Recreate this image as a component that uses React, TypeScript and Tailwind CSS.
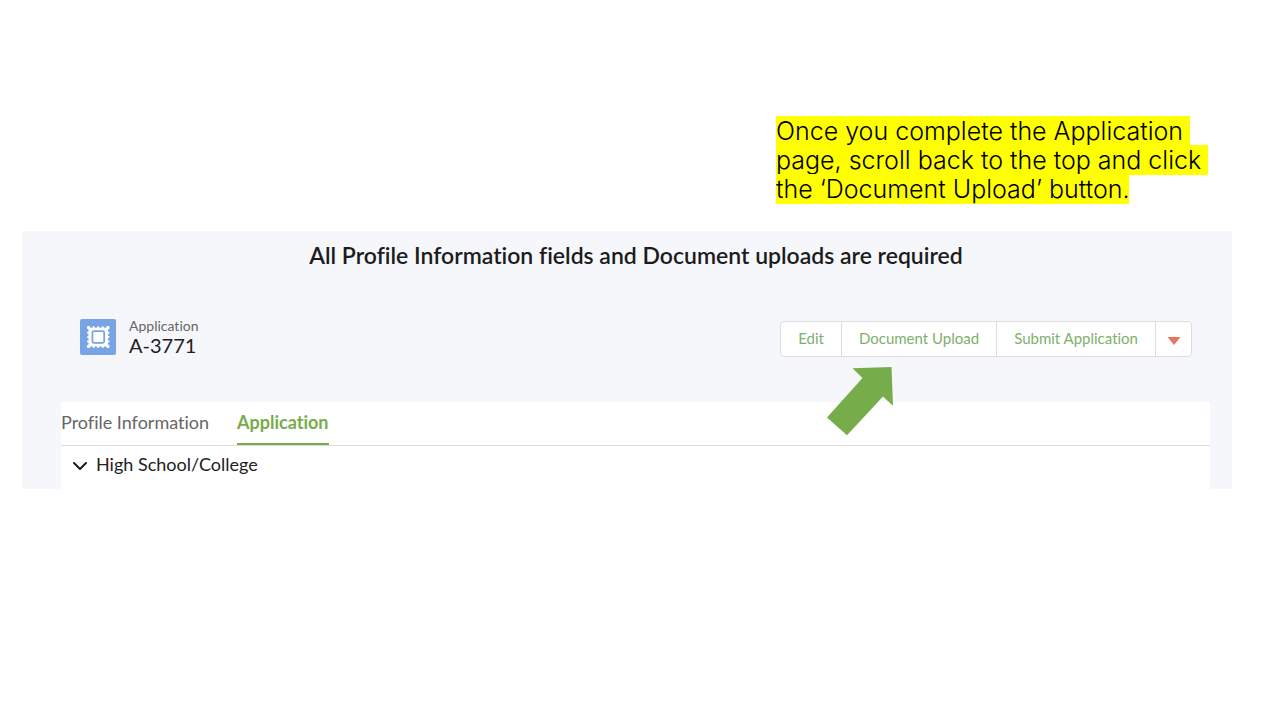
import { useState } from 'react';

const tabs = ['Profile Information', 'Application'];

function ApplicationIcon() {
  return (
    <svg className="size-9 shrink-0" viewBox="0 0 36 36" fill="none" aria-hidden="true">
      <rect width="36" height="36" rx="2" fill="#76A4E4" />
      <rect x="7" y="7" width="22.5" height="22" rx="1" fill="white" />
      {/* perforated edge of the stamp */}
      <g fill="#76A4E4">
        <circle cx="11.4" cy="7.2" r="1.6" />
        <circle cx="15.9" cy="7.2" r="1.6" />
        <circle cx="20.5" cy="7.2" r="1.6" />
        <circle cx="25" cy="7.2" r="1.6" />
        <circle cx="11.4" cy="28.8" r="1.6" />
        <circle cx="15.9" cy="28.8" r="1.6" />
        <circle cx="20.5" cy="28.8" r="1.6" />
        <circle cx="25" cy="28.8" r="1.6" />
        <circle cx="7" cy="11.4" r="1.6" />
        <circle cx="7" cy="15.8" r="1.6" />
        <circle cx="7" cy="20.2" r="1.6" />
        <circle cx="7" cy="24.6" r="1.6" />
        <circle cx="29.5" cy="11.4" r="1.6" />
        <circle cx="29.5" cy="15.8" r="1.6" />
        <circle cx="29.5" cy="20.2" r="1.6" />
        <circle cx="29.5" cy="24.6" r="1.6" />
      </g>
      <rect x="12.4" y="12.2" width="11.8" height="11.6" rx="1.5" stroke="#76A4E4" strokeWidth="1.8" />
    </svg>
  );
}

function ApplicationHeader() {
  return (
    <div className="relative flex items-start justify-between pl-[58px] pr-10">
      <div className="flex items-start gap-[13px]">
        <ApplicationIcon />
        <div className="-mt-0.5">
          <p className="text-sm leading-[17px] text-[#666666]">Application</p>
          <h2 className="text-xl leading-[22px] text-[#222222]">A-3771</h2>
        </div>
      </div>
      <div className="mt-0.5 flex h-9 divide-x divide-[#dddddd] rounded border border-[#dddddd] bg-white text-[15px] text-[#7db16b]">
        <button type="button" className="px-[17px] pb-0.5">
          Edit
        </button>
        <button type="button" className="px-[17px] pb-0.5">
          Document Upload
        </button>
        <button type="button" className="px-[17px] pb-0.5">
          Submit Application
        </button>
        <button type="button" className="w-[35px] pt-1" aria-label="More actions">
          <svg className="mx-auto h-2 w-[14px]" viewBox="0 0 14 8" fill="none">
            <path d="M0.5 0H13.5L7 8Z" fill="#E87461" />
          </svg>
        </button>
      </div>
      <svg
        className="absolute right-[338px] top-12 h-[69px] w-[68px]"
        viewBox="0 0 68 69"
        fill="none"
        aria-hidden="true"
      >
        <path d="M26.5 1.3L65.5 0L67 38.7L57 29.5L21 68.3L1 50.5L36.5 11Z" fill="#77AC4B" />
      </svg>
    </div>
  );
}

function App() {
  const [activeTab, setActiveTab] = useState('Application');
  const [expanded, setExpanded] = useState(true);

  return (
    <main className="bg-white pt-[117px] font-['Lato',sans-serif] [font-variant-ligatures:none]">
      <p className="ml-auto w-[504px] font-['Inter',sans-serif] text-[25px] leading-[29px] font-light text-black">
        <span className="bg-[#ffff00]">
          Once you complete the Application&nbsp;
          <br />
          page, scroll back to the top and click&nbsp;
          <br />
          the ‘Document Upload’ button.
        </span>
      </p>
      <section className="mr-12 ml-[22px] mt-[27px] bg-[#f5f7fb] pt-2">
        <h1 className="pl-[18px] text-center text-[23px] leading-8 font-semibold text-[#1c1c1c]">
          All Profile Information fields and Document uploads are required
        </h1>
        <div className="mt-12">
          <ApplicationHeader />
        </div>
        <div className="mr-[22px] ml-[39px] mt-[45px] bg-white">
          <div role="tablist" className="flex gap-7 border-b border-[#dddddd]">
            {tabs.map((tab) => (
              <button
                key={tab}
                type="button"
                role="tab"
                aria-selected={activeTab === tab}
                onClick={() => setActiveTab(tab)}
                className={
                  activeTab === tab
                    ? 'h-[43px] border-b-2 border-[#77ac4b] pb-0.5 text-lg font-bold text-[#77ac4b]'
                    : 'h-[43px] border-b-2 border-transparent pb-0.5 text-lg text-[#666666]'
                }
              >
                {tab}
              </button>
            ))}
          </div>
          <button
            type="button"
            aria-expanded={expanded}
            onClick={() => setExpanded(!expanded)}
            className="flex h-[43px] items-start gap-[9px] pl-3 pt-1.5 text-lg leading-6 text-[#222222]"
          >
            <svg className="mt-2.5 h-2 w-[14px]" viewBox="0 0 14 8" fill="none">
              <path d="M1 1L7 7L13 1" stroke="#1c1c1c" strokeWidth="2" strokeLinecap="round" />
            </svg>
            High School/College
          </button>
        </div>
      </section>
    </main>
  );
}

export default App;
